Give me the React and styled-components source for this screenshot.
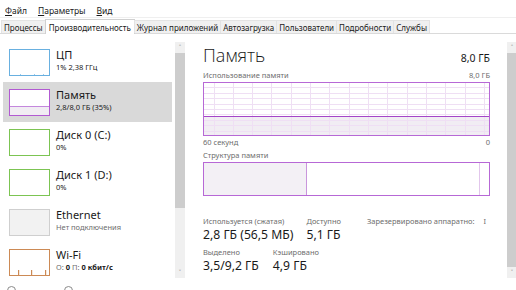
import styled, { createGlobalStyle } from "styled-components";

const GlobalStyle = createGlobalStyle`
  html, body {
    margin: 0;
    padding: 0;
    background: #fff;
  }
  body {
    font-family: "Noto Sans", "Open Sans", sans-serif;
    color: #1a1a1a;
  }
`;

const Window = styled.div`
  width: 516px;
  height: 290px;
  display: flex;
  flex-direction: column;
  overflow: hidden;
  background: #fff;
`;

const MenuBar = styled.div`
  height: 18px;
  display: flex;
  align-items: center;
  gap: 11px;
  padding: 3px 0 0 5px;
  font-size: 8.5px;
  border-bottom: 1px solid #efefef;
  box-sizing: border-box;
  flex-shrink: 0;
`;

const MenuItem = styled.span`
  &::first-letter {
    text-decoration: underline;
  }
`;

const TabStrip = styled.div`
  height: 16px;
  display: flex;
  align-items: flex-end;
  padding-left: 2px;
  border-bottom: 1px solid #dadada;
  box-sizing: border-box;
  flex-shrink: 0;
`;

const Tab = styled.div`
  height: ${(p) => (p.$active ? "15px" : "13px")};
  box-sizing: border-box;
  display: flex;
  align-items: center;
  padding: 0 ${(p) => (p.$active ? "3px" : "2px")};
  font-size: 8px;
  white-space: nowrap;
  background: ${(p) => (p.$active ? "#fff" : "#f0f0f0")};
  border: 1px solid ${(p) => (p.$active ? "#d0d0d0" : "#e3e3e3")};
  border-bottom: none;
  margin-bottom: ${(p) => (p.$active ? "-1px" : "0")};
  margin-left: -1px;
  position: relative;
`;

const Body = styled.div`
  flex: 1;
  display: flex;
  min-height: 0;
`;

const Sidebar = styled.div`
  width: 186px;
  flex-shrink: 0;
  display: flex;
  gap: 3px;
  padding: 8px 0 0 3px;
  box-sizing: border-box;
`;

const List = styled.div`
  width: 169px;
  display: flex;
  flex-direction: column;
`;

const Item = styled.div`
  height: 40px;
  flex-shrink: 0;
  display: flex;
  gap: 6px;
  padding: 7px 0 0 6px;
  box-sizing: border-box;
  background: ${(p) => (p.$selected ? "#d9d9d9" : "transparent")};
`;

const Thumb = styled.div`
  width: 41px;
  height: 27px;
  flex-shrink: 0;
  box-sizing: border-box;
  border: 1px solid ${(p) => p.$color};
  background: ${(p) => p.$bg || "#fff"};
  display: flex;
`;

const ItemText = styled.div`
  display: flex;
  flex-direction: column;
`;

const ItemTitle = styled.div`
  font-size: 11px;
  line-height: 13px;
  margin-top: -1px;
`;

const ItemSub = styled.div`
  font-size: 7.5px;
  line-height: 10px;
  margin-top: 1px;
  color: ${(p) => (p.$muted ? "#6d6d6d" : "#1a1a1a")};
  white-space: nowrap;
  b {
    font-weight: 700;
    color: #1a1a1a;
  }
`;

const Scrollbar = styled.div`
  width: 10px;
  flex-shrink: 0;
  height: 236px;
  background: #f0f0f0;
  display: flex;
  flex-direction: column;
  align-items: center;
  font-size: 7px;
  color: #606060;
`;

const Arrow = styled.div`
  height: 11px;
  display: flex;
  align-items: center;
  justify-content: center;
  flex-shrink: 0;
`;

const ThumbBar = styled.div`
  width: 100%;
  height: ${(p) => p.$h}px;
  background: #cdcdcd;
  flex-shrink: 0;
`;

const Spacer = styled.div`
  flex: 1;
`;

const Main = styled.div`
  flex: 1;
  display: flex;
  padding-top: 8px;
`;

const Content = styled.div`
  flex: 1;
  padding: 0 17px;
  display: flex;
  flex-direction: column;
`;

const Header = styled.div`
  display: flex;
  justify-content: space-between;
  align-items: baseline;
  height: 28px;
`;

const Title = styled.div`
  font-family: "Open Sans", "Noto Sans", sans-serif;
  font-size: 18px;
  font-weight: 300;
  line-height: 26px;
`;

const TotalBig = styled.div`
  font-size: 10.5px;
`;

const Caption = styled.div`
  display: flex;
  justify-content: space-between;
  font-size: 7.5px;
  line-height: 10px;
  color: #6d6d6d;
  margin: ${(p) => p.$m || "0"};
`;

const Graph = styled.svg`
  display: block;
  width: 287px;
  height: ${(p) => p.$h}px;
`;

const Stats = styled.div`
  display: flex;
  gap: 13px;
  margin-top: 20px;
`;

const Stat = styled.div`
  display: flex;
  flex-direction: column;
`;

const StatLabel = styled.div`
  font-size: 7.5px;
  line-height: 10px;
  color: #6d6d6d;
  white-space: nowrap;
`;

const StatValue = styled.div`
  font-size: 12.2px;
  line-height: 18px;
  white-space: nowrap;
`;

const Reserved = styled.div`
  display: flex;
  gap: 9px;
  font-size: 7.5px;
  line-height: 10px;
  color: #6d6d6d;
  margin-left: 13px;
  white-space: nowrap;
`;

const Row2 = styled.div`
  display: flex;
  gap: 14px;
  margin-top: 3px;
`;

const Footer = styled.div`
  height: 11px;
  flex-shrink: 0;
  display: flex;
  gap: 48px;
  padding: 7px 0 0 7px;
  box-sizing: border-box;
`;

const FooterIcon = styled.div`
  width: 9px;
  height: 9px;
  border: 1px solid #8a8a8a;
  border-radius: 50%;
  box-sizing: border-box;
`;

function MiniGraph({ kind }) {
  if (kind === "memory") {
    return (
      <svg width="39" height="25">
        <rect x="0" y="16" width="39" height="9" fill="#f1edf3" />
        <line x1="0" y1="16.5" x2="39" y2="16.5" stroke="#c487dd" />
      </svg>
    );
  }
  if (kind === "wifi") {
    return (
      <svg width="39" height="25">
        {[8, 21, 35].map((x) => (
          <rect key={x} x={x} y="20" width="1.2" height="5" fill="#cc8a55" />
        ))}
      </svg>
    );
  }
  if (kind === "cpu") {
    return (
      <svg width="39" height="25">
        {[10, 24, 33].map((x) => (
          <rect key={x} x={x} y="24" width="1" height="1" fill="#9ccaea" />
        ))}
      </svg>
    );
  }
  return null;
}

const items = [
  { title: "ЦП", sub: "1% 2,38 ГГц", color: "#69b0e0", kind: "cpu" },
  { title: "Память", sub: "2,8/8,0 ГБ (35%)", color: "#b25ad2", kind: "memory", selected: true },
  { title: "Диск 0 (C:)", sub: "0%", color: "#7cc452" },
  { title: "Диск 1 (D:)", sub: "0%", color: "#7cc452" },
  { title: "Ethernet", sub: "Нет подключения", color: "#cfcfcf", bg: "#f2f2f2", muted: true },
  { title: "Wi-Fi", wifi: true, color: "#cc8a55", kind: "wifi" },
];

const tabs = [
  "Процессы",
  "Производительность",
  "Журнал приложений",
  "Автозагрузка",
  "Пользователи",
  "Подробности",
  "Службы",
];

function UsageGraph() {
  const w = 287;
  const h = 54;
  const usageY = 34.5;
  const cols = [];
  for (let x = 10.5; x < w; x += 19.33) cols.push(Math.round(x) + 0.5);
  const rows = [];
  for (let i = 1; i < 10; i++) rows.push(Math.round((h * i) / 10) + 0.5);
  return (
    <Graph $h={h} viewBox={`0 0 ${w} ${h}`}>
      <rect x="0" y={usageY} width={w} height={h - usageY} fill="#f1edf3" />
      {cols.map((x) => (
        <line key={"c" + x} x1={x} y1="0" x2={x} y2={h} stroke="#efdff4" />
      ))}
      {rows.map((y) => (
        <line key={"r" + y} x1="0" y1={y} x2={w} y2={y} stroke="#efdff4" />
      ))}
      <line x1="0" y1={usageY} x2={w} y2={usageY} stroke="#a445c8" />
      <rect x="0.5" y="0.5" width={w - 1} height={h - 1} fill="none" stroke="#b768d6" />
    </Graph>
  );
}

function CompositionBar() {
  const w = 287;
  const h = 34;
  return (
    <Graph $h={h} viewBox={`0 0 ${w} ${h}`}>
      <rect x="0" y="0" width="103" height={h} fill="#f3f0f5" />
      <line x1="103.5" y1="0" x2="103.5" y2={h} stroke="#c996dc" />
      <line x1="276.5" y1="0" x2="276.5" y2={h} stroke="#e2c6ec" />
      <rect x="0.5" y="0.5" width={w - 1} height={h - 1} fill="none" stroke="#b768d6" />
    </Graph>
  );
}

function ScrollColumn({ thumb }) {
  return (
    <Scrollbar>
      <Arrow>˄</Arrow>
      <ThumbBar $h={thumb} />
      <Spacer />
      <Arrow>˅</Arrow>
    </Scrollbar>
  );
}

export default function App() {
  return (
    <Window>
      <GlobalStyle />
      <MenuBar>
        <MenuItem>Файл</MenuItem>
        <MenuItem>Параметры</MenuItem>
        <MenuItem>Вид</MenuItem>
      </MenuBar>
      <TabStrip>
        {tabs.map((t) => (
          <Tab key={t} $active={t === "Производительность"}>
            {t}
          </Tab>
        ))}
      </TabStrip>
      <Body>
        <Sidebar>
          <List>
            {items.map((it) => (
              <Item key={it.title} $selected={it.selected}>
                <Thumb $color={it.color} $bg={it.bg}>
                  <MiniGraph kind={it.kind} />
                </Thumb>
                <ItemText>
                  <ItemTitle>{it.title}</ItemTitle>
                  {it.wifi ? (
                    <ItemSub $muted>
                      О: <b>0</b> П: <b>0 кбит/с</b>
                    </ItemSub>
                  ) : (
                    <ItemSub $muted={it.muted}>{it.sub}</ItemSub>
                  )}
                </ItemText>
              </Item>
            ))}
          </List>
          <ScrollColumn thumb={155} />
        </Sidebar>
        <Main>
          <Content>
            <Header>
              <Title>Память</Title>
              <TotalBig>8,0 ГБ</TotalBig>
            </Header>
            <Caption $m="0 0 2px">
              <span>Использование памяти</span>
              <span>8,0 ГБ</span>
            </Caption>
            <UsageGraph />
            <Caption $m="1px 0 0">
              <span>60 секунд</span>
              <span>0</span>
            </Caption>
            <Caption $m="3px 0 2px">
              <span>Структура памяти</span>
            </Caption>
            <CompositionBar />
            <Stats>
              <Stat>
                <StatLabel>Используется (сжатая)</StatLabel>
                <StatValue>2,8 ГБ (56,5 МБ)</StatValue>
              </Stat>
              <Stat>
                <StatLabel>Доступно</StatLabel>
                <StatValue>5,1 ГБ</StatValue>
              </Stat>
              <Reserved>
                <span>Зарезервировано аппаратно:</span>
                <span>I</span>
              </Reserved>
            </Stats>
            <Row2>
              <Stat>
                <StatLabel>Выделено</StatLabel>
                <StatValue>3,5/9,2 ГБ</StatValue>
              </Stat>
              <Stat>
                <StatLabel>Кэшировано</StatLabel>
                <StatValue>4,9 ГБ</StatValue>
              </Stat>
            </Row2>
          </Content>
          <ScrollColumn thumb={214} />
        </Main>
      </Body>
      <Footer>
        <FooterIcon />
        <FooterIcon />
      </Footer>
    </Window>
  );
}
